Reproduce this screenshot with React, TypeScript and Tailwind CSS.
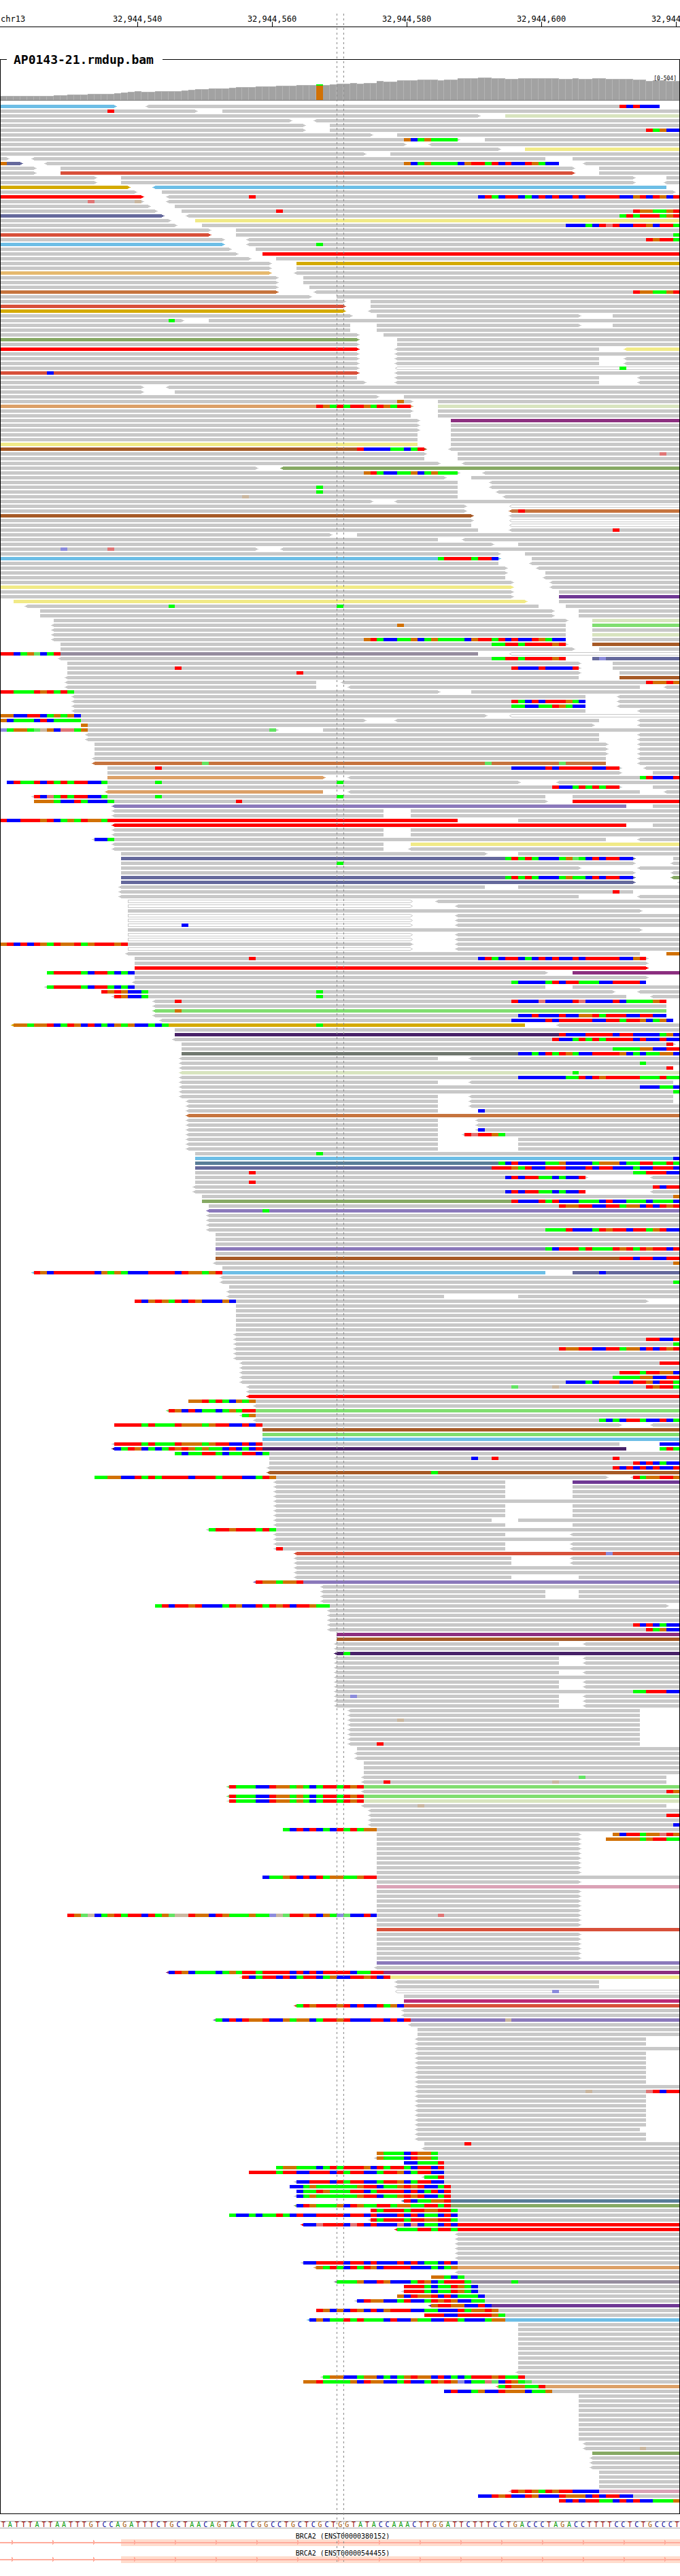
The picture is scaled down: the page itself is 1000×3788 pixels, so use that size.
import React from "react";

const BASES = 101;
const VIEW_WIDTH = 1000;
const ROW_PITCH = 7;
const READ_HEIGHT = 5;

const cellX = (cell: number) => Math.round((cell * VIEW_WIDTH) / BASES);

const MATE_COLORS: Record<string, string> = {
  b: "#6dbee6",
  r: "#ff0000",
  t: "#d8503a",
  g: "#d4aa00",
  n: "#65699c",
  y: "#f1ea87",
  l: "#d8e4bf",
  o: "#e6b96e",
  e: "#c6743e",
  m: "#86a964",
  p: "#8c2f80",
  v: "#6f3894",
  d: "#482268",
  w: "#a65a26",
  a: "#80de70",
  u: "#8b79bb",
  k: "#968d9f",
  i: "#597d98",
  q: "#70786f",
  z: "#dca067",
  f: "#dba2b6",
  c: "#bb2b77",
};

const BASE_COLORS: Record<string, string> = {
  A: "#00ff00",
  C: "#0000ff",
  G: "#d17105",
  T: "#ff0000",
  a: "#63e463",
  c: "#8c8cdc",
  g: "#cab7a0",
  t: "#e07676",
};

const READ_GRAY = "#c8c8c8";

/*
 * One line per pileup row, optionally prefixed by a repeat count ("3x").
 * A read is written [<]start-end[>][colour][@cellBASES...]; "<" and ">" mark
 * the strand arrow, "h" a hollow (low mapping quality) read. Lower-case bases
 * are low quality. An omitted start is the left edge, an omitted end the right.
 */
const PILEUP = `
-17>b <22-98@92TCTCCC
-29>@16T 33-
-71> 75-l
-43> <47-
-45> 49-
-45> 49-@96TAGCC
-55> 59-
-68>@60GCAGAAAA 72-
-60> <64-
-74> 78-y
-54> 58-
-1> <5-81 85-
-3>n@0G <7-83@60GCAGAAAACGTTATCTCCTGACC <87-
-5> 9-85> 89-
-5> 9-85>t 89-
-14> 18-94> 99-
-14> 18-94> <99-
-19>g <23-99b
-20> 24-100>
-21>r <25-@37T@71CTACTTCACTCTCCTCTTTTTCCGTCTGCT
-21>@13t@20g <25-
-22> 26-
-23> 27-@41T@94TGGAAGT
-24>n <28-@92ATATTTAGT
-25> 29-y
-26> 30-@84CCCACTtTCCTTGCTTA
-31> 35-
-31>t 35-@100A
-33> <37-@96TGTTA
-33>b <37-@47A
-34> 38-
-35> 39-r
-37> 41-
-40> 44-g
-40> 44-
-40>o <44-
2x -41> 45-
-41> 46-
-41>e <47-@94TGGAAGT
-46> 50-
-51> 55-
-51>t 55-
-51>g <55-
-52> 56-86> 91-
-27>@25A 31-
-52 56-86> 91-
-52 56-
-53> 57-
-53>m 59-
-53> 59-
-53>r <59-89 <93-y
-53> <59-
2x -53> <59-89 <93-
-53> <59-h@92A
-53>t@7C <59-
-53 <59-89 <95-
-54> <59-89 <95-
-21> <25-
-21> 26-
-56> 60-
-61>@59G 65-
-61>z@47TGATATTGATGATT 65-l
-61> 65-
-61 65-
-62> 67-p
2x -62> 67-
2x -62 67-
-62y 67-
-63>w@53TCCCCAACAT <67-
-63> 68-@98t
-63 68-
-65> <69-
-38> <42-m
-68>@54GTACCAAGCAGAAA <72-
-66> 70-
-68 <73-
-68@47A <73-
-68@47A <74-
-68@36g <75-
-55> <59-
-69> <76-h
-69> <76-e@77T
-70>w <76-
-70> <76-h
-70 <76-h
-71 <76-@91T
-49> 53-
-65 <69-
-73> 77-
-38>@9c@16t <42-
-74> 78-
-74>b@65ATTTTATTC 79-
-74 <79-
-75> <80-
-75> 81-
-75 <81-
-76> <82-
-76>y <82-
-76> 83-
-76> 83-v
2-78>y 83-
<4-80@25A@50A 84-
2x 6-82> 86-
8-84> 88-l
<8-84@59G 88-a
<8-84 88-
<8-84 88-l
<8-84@54GTACCAAGCAGAAAACGTTATCTCCTGACC 88-
9-84>@73AATTATTTTGT 88-w
9-85> 89-
-71k@0TTCAGaCAT <76-h
<9-84@73AATTATTTTGT 88-n@89c
10-86> 91-
10-86>@26T@76TCCCTCCCCT 91-
10-86>@44T 92-
<10-86 92-w
<10-47 <51-@96TGGTG
<10-47 <52-95 <99-
-65>@0TTAAATGTATA 70-
<11-87 <92-
<11-87@76TACTCTTTGAC <92-
<11-87@76AACCAATGACC <92-
<11-87 <95-
-72>@0GGCCTTCAGAGC <76-h
-54>@0GCAAACTCAAAA <59-89 <95-
12-88>@12G <95-
-41>@0cAGGAagGCttAG@40a 48-
2x <13-89 <95-
3x 14-90> <95-
<14-90 <95-
<14-90e@30a@72a@83a <95-
16-92>@23T@76CCCCCTCTTTTTCCTT <96-
16-92> 97-
16-48>z <52-@95ATCCCT
1-77>@1CTAATCTATATTCCA@23A@50A <83-
16-92>@82TCCATATATT 97-
<16-48z <52-95 <99-
<5-81@5TCtATATTCCA@23A@50A 85-
5-81>@5GGGACCTACCCA@35T 85-r
<17-93u 97-
2x <17-57 61-
-68r@0TCCTTTGTCAGATGGA 77-
<17-93r 97-
2x <17-57 61-
<14-90@14CCA <95-
<17-57 61-y
<17-57 <61-
18-72> 77-
18-94>n@75ATATACCCAGaACTCTTCC 100-
18-94>@50A <100-
18-86> <95-
18-94> <100-
18-94>n@75ATATACCCAGAACTCTTCC <100-m
18-94>n <101-
<18-72 77-
<18-94@91T
<18-86 <95-
19-61>h <65-
19-61>h <68-
19-95>
2x 19-61>h <68-
19-61>h@27C <68-
19-95>
2x 19-61>h <68-
-61>@0GTCTCTGATGGTAGTTTGT <68-
19-61>h <68-
<19-95 99-@99GG
20-96>@37T@71CTACTTCACTCTCCTCTTTTTCCGT
20-96>
20-96>r
7-81>@7ATTTTACTTACAC 85-p
20-96>
<20-96@76ACCCCATCTTAAACCTTTTC
<7-81@7ATTTTACTTACAC 85-
15-91>@15TGTGCCA@47A <95-
<17-93@17TGCCA@47A <97-
<23-99@26T@76TCCCtCCCCTtCCCCTCAAAAGT
<23-99
<23-99a@26G
<23-99@77CCTCCCTCCGGTATTTCCTTCC
<24-100@76CCCCCTCTTTTTCCTTATTGCAGC
<2-78g@2GGAGGTCATGCTCACGAGCCACA@47A <83-
26-
26-d@83TCCCTTTTCTTCCCCAGC
<26-@82TCCATATATTTTCTCCTCC
27-100>@99T
27-@91AAAAGGCCTT
27-q@77CCACTATGACCTTTTGCACAAGGC
<27-65 <70-
<27-@95A
<27-100@99T
<27-l@85A
<27-@77CCCCCCCAATCTGTTTTTAAATAA
<27-65 <70-100
<27-@95CCCAAC
<27-@100A
<27-65 <70-100
<28-65 <70-100
<28-65 <70-
<28-65 71-@71C
<28-e
2x <28-65 <71-
<28-65 <71-@71C
<28-65 <69-@69TtTTGA
3x <28-65 77-
29-@47A
29-b@100C
29-i@74ACTCCCCAAGCCCCAGGGCAATTAATA
29-n@73TTTGATCCTTTCCCTCTTCCCACCTTTC
29-@37T@94AATTTCC
29-87>@75CTCTTAACACCT <97-
29-@37T
<29-@97TCTT
<29-87@75CTCTTAACACCT <97-
30-@100G
30-m@76TCCCTATCCCAAACTCCAAACAAAC
31-@83TGGTTCCTTAGGCTCTGT
<31-u@39A
3x <31-
<31-@81AAATCCCATGTTCTTAGTCC
3x 32-
32-u@81ACTTTATAAATGTATGTTCT
32-
32-w@92TTCTTCCTT
<32-@100G
33-
<5-81b@5TGCTTTTTTCGAGACCCTTTTCTGGAGT 85-n@89C
<33-
<33-@100A
34-
<34-
<34-66 77-
20-96>@20TCGTGATCTGCCCGC
6x 35-
<35-
<35-@96TTCCT
<35-@100A
<35-@83TGGTTCCTTAGGCTCTGT
2x <35-
<36-@98TTT
<36-
<36-@92TTTATTGGC
<36-@91AAAAGGCCTT
<36-@84CCCACTTTCCTTGCTTA
<37-@76a@82g@96TGTTA
<37-
<37-r
28-@28GGTATACGAG
<38-
<25-a@25TGCTCAACAGATT
<36-@36AG
<38-@89ACACTTACCTCA
17-92>@17TTTTATAAATGGGAGTTCCTCT <97-
39-w
39-a
39-b
<17-92@17TTTTATAAATGGGAGTTCCTCT 98-@98CCC
<17-93d@17CATGCACATGTGAGAACTCACT 98-@98ATA
26-@26ACAATTACAATTCA
40-@70C@73T@91T
40-@94TCTCACC
<40-@91TCTCTCTCCT
<40-w@64A
14-90>@14AAGGCCTATATTTTCTTTATTTCCATG <94-@94TAGGTTG
<41-75 85-v
3x <41-75 85-
<41-
3x <41-75 85-
<41-73 77-
<41-75 85-
<31-@31ATTGTTTATA
<41-75 <85-
<41-
<41-75 <85-
<41-75@41T <85-
<44-t@90c
2x <44-76 <85-
2x <44-
<44-76 86-
<38-u@38TGGAGGT
<48-
2x <48-81 86-
<48-
23-99>@23ATCTTGTCCCATGCCTATGTCTTGAA
<49-
2x <49-
<49-@94TCTCACC
<49-@96TAGCC
50-p
50-w
<50-83 <87-
<50-
<50-d@51A
2x <50-83 <87-
<50-
<50-83 <87-
<50-
2x <50-83 <87-
<50-@94AATTTCC
<50-83@52c <87-
2x <50-83 <87-
2x <52-95
<52-95@59g
4x <52-95
<52-95@56T
53-
2x <53-
3x 54-
<54-99@86a
<54-99@57T@82g
<34-a@34TAAACCTGGAGACATTATGT
<54-@99TG
<34-a@34TAAACCTGGAGACATTATGT
<34-l@34TAAACCTGGAGACATTATGT
<54-99@62g
<55-
<55-@99TT
<55-
<55-@100C
42-@42ACTCTCACTATAGG
56-86> 91-@91GCTTAGGtTG
56-86> 90-@90GGGGGAGTTAA
7x 56-86>
39-@39CAAGTCTCTAGGAAGTT
56-86>
56-f
5x 56-86>
10-86>@10TGagCAGTATTCTAGaggTGGCTGAAAGAAcgaTTGTCGAcaCCTC@65t
2x 56-86>
56-t
6x 56-86>
56-u
<56-
<25-p@25CTGCAAACAGATTATTTTCTCTCTTTTCAATT
<36-y@36TCATTCTCATTCAGCCTTGTCT
2x <59-89
<59-h@82c
60-
60-c
<44-t@44ATGTTTGTCTCCTAGC
2x <60-
<32-u@32ACTCTGGTCCGAGGCATTGTCCCTTCTCT@75g
<61-
2x 62-
2x <62-96
<62-
2x <62-96
5x <62-96
<62-
<62-@87g@96tTCTT
7x <62-96
<62-95
2x <62-96
63-@69T
<63-
56-@56GAAACTGGA
<56-@56GAAACTGGA
60-@60CCAAAT
41-@41AGGAAACATATTTGCTATTACTTCT
37-@37TTTTATTCCTTTCTATTCCATTGCATTCC
<63-@63AAT
<44-@44CCTTTCTATTCCATTGCATTCC
43-@43CCAGAAAAAAGTTCAAGTGTCCAT
44-@44CAATGAAATTCATTTTCTCATCT
<44-@44CAGAAAAAAGTTCAAGTGTCCAT
<60-i@60TCAAGGT
<44-m@44CTGAAAGCTGAATTAGGAATTAT
55-@55TATTTATTGGTTA
34-@34ACCACAATACTCCTTTTCTTCTCCCTCTCAACTC
<55-@55TATTTATTGGTTA
<45-r@45CCtTTTCtTCTCCCtCtCAACTC
<59-r@59AAATTATTA
6x <68-
<45-@45CCTTTTCTTCTCCCTCTCAACTC
<47-z@47GATACTATGCTTTTCCCACAG
<68-
64-@64GGACA
<50-k@50AAAGCCTGCCCATGCATTTA@76A
60-@60TTTACAATGAC
<60-@60TTTACAATGAC
59-@59GCTGGTCTCAAAC
<53-@53CTGGCCATCCATGTGCCAA
<64-v@64GTTGGCCTC
47-@47TGCGCTGCTCGTTTCCAACCCTAGGTG
63-@63TTTCCTTTTTGA
<46-b@46CGCAATATAAACTCCGAACCTTACCCAGG
10x 77-
<77-
<48-@48AGGCCAGGCACAGTGGCTCACATTTGTAAT
45-@45GGTAAAAGCTGGCCATCCATGTGcCAAtaCTGAa
<74-z@74ATGGAAT
66-@66CTCCAGCCTGGGCAAG
10x 86-
<87-
<87-@95g
88-m
3x <88-
4x 89-
<76-f@76TGTGATGTTCCCC
71-@71CCTGTCCTGCCCTGGGCTCTTCC
83-@83TCTCTTAACTCTCCAAAG
`;

const ROWS: string[] = PILEUP.trim()
  .split("\n")
  .flatMap((line) => {
    const repeat = /^(\d+)x (.*)$/.exec(line);
    return repeat ? Array<string>(Number(repeat[1])).fill(repeat[2]) : [line];
  });

function Mismatches({ text, y }: { text: string; y: number }) {
  return (
    <>
      {text
        .split("@")
        .filter(Boolean)
        .map((run) => {
          const parts = /^(\d+)(\w+)$/.exec(run);
          if (!parts) return null;
          const first = Number(parts[1]);
          return parts[2].split("").map((base, i) => {
            const x = cellX(first + i);
            return (
              <rect
                key={first + i}
                x={x}
                y={y}
                width={cellX(first + i + 1) - x}
                height={READ_HEIGHT}
                fill={BASE_COLORS[base]}
              />
            );
          });
        })}
    </>
  );
}

function Read({ spec, y }: { spec: string; y: number }) {
  const parts = /^(<?)(\d*)-(\d*)(>?)([a-z]?)(.*)$/.exec(spec);
  if (!parts) return null;
  const reverse = parts[1] === "<";
  const forward = parts[4] === ">";
  const x0 = parts[2] ? cellX(Number(parts[2])) : -5;
  const x1 = parts[3] ? cellX(Number(parts[3])) : VIEW_WIDTH + 5;
  const hollow = parts[5] === "h";

  let shape;
  if (hollow) {
    const left = reverse
      ? `M${x0 + 0.5} ${y + 0.5}L${x0 - 2.5} ${y + 2.5}L${x0 + 0.5} ${y + 4.5}`
      : `M${x0 + 0.5} ${y + 0.5}V${y + 4.5}`;
    const right = forward ? `H${x1 - 0.5}L${x1 + 2.5} ${y + 2.5}L${x1 - 0.5} ${y + 0.5}` : `H${x1 - 0.5}V${y + 0.5}`;
    shape = <path d={`${left}${right}Z`} fill="#ffffff" stroke={READ_GRAY} />;
  } else {
    const left = reverse
      ? `M${x0} ${y}v1h-2v1h-2v1h2v1h2v1`
      : `M${x0} ${y}v5`;
    const right = forward ? `H${x1}v-1h2v-1h2v-1h-2v-1h-2v-1` : `H${x1}v-5`;
    shape = <path d={`${left}${right}Z`} fill={MATE_COLORS[parts[5]] ?? READ_GRAY} />;
  }

  return (
    <g>
      {shape}
      <Mismatches text={parts[6]} y={y} />
    </g>
  );
}

function Pileup() {
  const height = ROWS.length * ROW_PITCH;
  return (
    <svg
      role="img"
      aria-label="Aligned reads"
      className="mt-1.5 block w-full"
      height={height}
      viewBox={`1 0 ${VIEW_WIDTH - 2} ${height}`}
      preserveAspectRatio="none"
      shapeRendering="crispEdges"
    >
      {ROWS.map((row, i) => (
        <g key={i}>
          {row.split(" ").map((spec, j) => (
            <Read key={j} spec={spec} y={i * ROW_PITCH} />
          ))}
        </g>
      ))}
    </svg>
  );
}

/* [number of bases, bar height] runs, left to right */
const COVERAGE_RUNS: [number, number][] = [
  [8, 7], [2, 8], [3, 9], [4, 10], [1, 11], [1, 12], [1, 13], [1, 14], [2, 13],
  [4, 14], [1, 15], [1, 16], [2, 17], [3, 18], [1, 19], [3, 20], [3, 21], [3, 22],
  [3, 23], [1, 24], [1, 23], [1, 24], [2, 25], [1, 26], [1, 25], [2, 26], [1, 29],
  [2, 28], [3, 30], [3, 31], [1, 30], [2, 31], [3, 33], [2, 34], [2, 33], [2, 32],
  [6, 33], [2, 32], [1, 33], [2, 32], [2, 33], [4, 32], [2, 31], [1, 29], [2, 30],
  [2, 29],
];
const COVERAGE = COVERAGE_RUNS.flatMap(([n, h]) => Array<number>(n).fill(h));
const VARIANT_CELL = 47;
const COVERAGE_HEIGHT = 47;

function Coverage() {
  return (
    <div className="relative">
      <svg
        role="img"
        aria-label="Coverage"
        className="block w-full"
        height={COVERAGE_HEIGHT}
        viewBox={`1 0 ${VIEW_WIDTH - 2} ${COVERAGE_HEIGHT}`}
        preserveAspectRatio="none"
        shapeRendering="crispEdges"
      >
        {COVERAGE.map((h, i) => {
          const x = cellX(i);
          const w = cellX(i + 1) - x;
          const top = COVERAGE_HEIGHT - h;
          if (i === VARIANT_CELL) {
            return (
              <g key={i}>
                <rect x={x} y={top} width={w} height={2} fill="#00ff00" />
                <rect x={x} y={top + 2} width={w} height={h - 2} fill="#d17105" />
              </g>
            );
          }
          return (
            <g key={i}>
              <rect x={x} y={top} width={w} height={h} fill="#b4b4b4" />
              <rect x={x} y={top + 1} width={w - 1} height={h - 1} fill="#a2a2a2" />
            </g>
          );
        })}
        <rect x={0} y={COVERAGE_HEIGHT - 1} width={VIEW_WIDTH} height={1} fill="#7d7d7d" />
      </svg>
      <span className="absolute top-2.5 right-1 text-[8px] leading-[10px]">[0-504]</span>
    </div>
  );
}

const TICKS = ["32,944,540", "32,944,560", "32,944,580", "32,944,600", "32,944,620"];

function Ruler() {
  return (
    <header className="flex overflow-hidden border-b border-black pt-[21px] text-[12px] leading-[14px]">
      <span className="w-[10.3%] shrink-0 pl-px">chr13</span>
      {TICKS.map((tick) => (
        <span key={tick} className="flex w-[19.8%] shrink-0 flex-col items-center">
          {tick}
          <span className="-mt-[3px] h-[7px] w-px bg-black" />
        </span>
      ))}
    </header>
  );
}

const SEQUENCE =
  "TATTTATTAATTTGTCCAGATTTCTGCTAACAGTACTCGGCCTGCTCGCTGGTATACCAAACTTGGATTCTTTCCTGACCCTAGACCTTTTCCTCTGCCCT";

const LETTER_CLASSES: Record<string, string> = {
  A: "text-[#009900]",
  C: "text-[#000099]",
  G: "text-[#a35200]",
  T: "text-[#990000]",
};

function Sequence() {
  return (
    <div className="mt-2.5 flex border-y border-[#a8a8a8] text-[10px] leading-[9px]">
      {SEQUENCE.split("").map((base, i) => (
        <span key={i} className={`min-w-0 flex-1 text-center ${LETTER_CLASSES[base]}`}>
          {base}
        </span>
      ))}
    </div>
  );
}

function Transcript({ name }: { name: string }) {
  const arrows = Array.from({ length: 17 }, (_, i) => 18 + i * 60);
  return (
    <div className="h-[25px]">
      <p className="pl-2 text-center text-[10px] leading-[12px]">{name}</p>
      <svg
        role="img"
        aria-label={`${name} exon`}
        className="-mt-0.5 block w-full"
        height={10}
        viewBox="0 0 1000 10"
        preserveAspectRatio="none"
        shapeRendering="crispEdges"
      >
        <rect x={178} y={0} width={822} height={10} fill="#ffdccd" />
        <rect x={0} y={4} width={1000} height={2} fill="#ffab9c" />
        {arrows.map((x) => (
          <path key={x} d={`M${x - 1} 1h1v1h1v2h1v2h-1v1h-1v1h-1z`} fill="#ffab9c" />
        ))}
      </svg>
    </div>
  );
}

const DASHES =
  "h-full w-px bg-[repeating-linear-gradient(to_bottom,#888888_0px,#888888_3px,transparent_3px,transparent_7px)]";

export default function App() {
  return (
    <main className="relative w-full overflow-hidden bg-white pb-[13px] font-['DejaVu_Sans_Mono',monospace] text-black">
      <Ruler />
      <fieldset className="mt-[34px] w-full min-w-0 border border-black pb-3.5">
        <legend className="ml-[9px] pr-[13px] pl-2.5 text-[18px] leading-[27px] font-bold">
          AP0143-21.rmdup.bam
        </legend>
        <Coverage />
        <Pileup />
      </fieldset>
      <Sequence />
      <div className="mt-1.5">
        <Transcript name="BRCA2 (ENST00000380152)" />
        <Transcript name="BRCA2 (ENST00000544455)" />
      </div>
      <div className="pointer-events-none absolute top-5 bottom-5 left-[49.5%] flex w-[1.1%] justify-between">
        <span className={DASHES} />
        <span className={DASHES} />
      </div>
    </main>
  );
}
